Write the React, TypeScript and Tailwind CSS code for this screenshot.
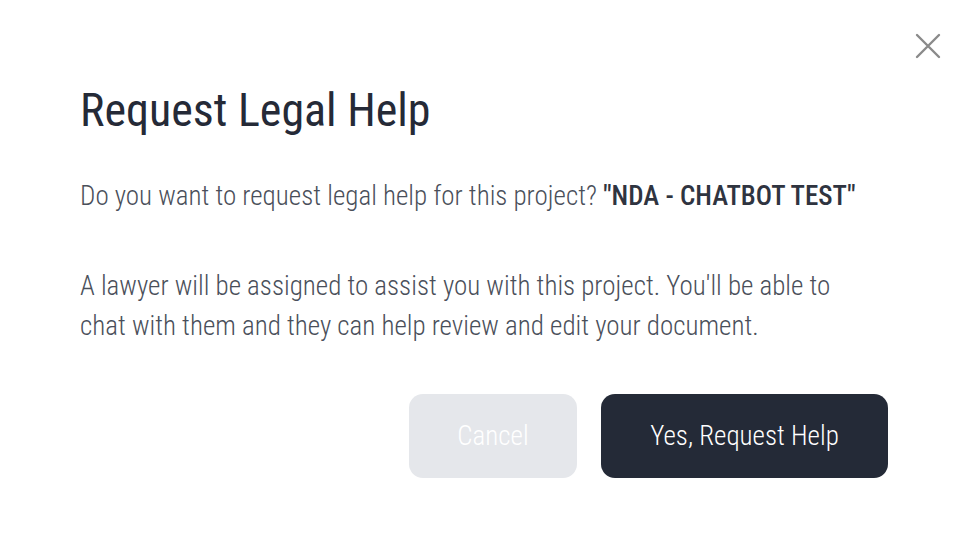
import React from "react";

export default function App() {
  return (
    <div className="w-[970px] h-[554px] bg-white relative font-['Roboto',sans-serif] font-stretch-condensed">
      <button className="absolute left-[914px] top-[32px] w-[28px] h-[28px] flex items-center justify-center text-[#8a8a8a]">
        <svg width="28" height="28" viewBox="0 0 28 28" fill="none" stroke="currentColor" strokeWidth="2.4" strokeLinecap="round">
          <path d="M3 3L25 25M25 3L3 25" />
        </svg>
      </button>
      <div className="pl-[80px] pr-[82px] pt-[80px] flex flex-col">
        <h1 className="text-[46px] leading-[60px] font-normal text-[#252a37]">Request Legal Help</h1>
        <p className="mt-[36px] text-[27px] leading-[40px] font-light text-[#4a4f5a]">
          Do you want to request legal help for this project?{" "}
          <span className="font-medium text-[#2f3440]">"NDA - CHATBOT TEST"</span>
        </p>
        <p className="mt-[50px] max-w-[790px] text-[27px] leading-[40px] font-light text-[#4a4f5a]">
          A lawyer will be assigned to assist you with this project. You'll be able to chat with them and they can help review and edit your document.
        </p>
        <div className="mt-[48px] flex justify-end gap-[24px]">
          <button className="w-[168px] h-[84px] rounded-[14px] bg-[#e5e7eb] text-white text-[27px] font-light">Cancel</button>
          <button className="w-[287px] h-[84px] rounded-[14px] bg-[#242a37] text-white text-[27px] font-light">Yes, Request Help</button>
        </div>
      </div>
    </div>
  );
}
